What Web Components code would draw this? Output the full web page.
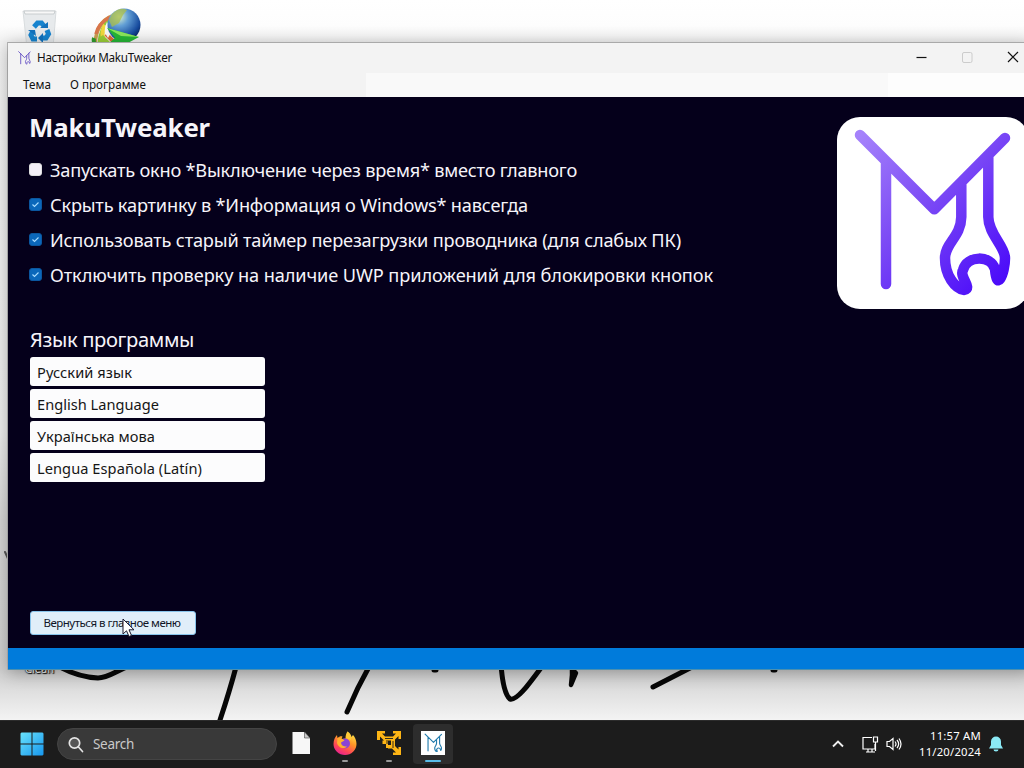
<!DOCTYPE html>
<html lang="ru">
<head>
<meta charset="utf-8">
<title>Настройки MakuTweaker</title>
<style>
html,body{margin:0;width:1024px;height:768px;overflow:hidden;background:#fff;font-family:"Noto Sans","Open Sans",sans-serif}
</style>
</head>
<body>
<desk-top>
  <app-window slot="window">
    <title-bar slot="bar"><fit-text w="135">Настройки MakuTweaker</fit-text></title-bar>
    <menu-bar slot="menu"><fit-text w="28">Тема</fit-text><fit-text w="76">О программе</fit-text></menu-bar>
    <settings-page></settings-page>
  </app-window>
  <task-bar slot="taskbar"></task-bar>
</desk-top>
<script>
const define=(name,html,Base=HTMLElement)=>customElements.define(name,class extends Base{
  constructor(){super();const t=document.createElement('template');t.innerHTML=html;
    this.attachShadow({mode:'open'}).append(t.content.cloneNode(true));}
});

/* A single line of text whose tracking is adjusted to fill the width given in "w". */
customElements.define('fit-text',class extends HTMLElement{
  constructor(){super();this.attachShadow({mode:'open'}).innerHTML='<style>:host{display:block;white-space:nowrap;flex:none}span{display:inline-block}</style><span><slot></slot></span>';}
  connectedCallback(){requestAnimationFrame(()=>this.fit());this.fit();}
  fit(){
    const s=this.shadowRoot.querySelector('span'),w=+this.getAttribute('w'),n=this.textContent.length;
    s.style.letterSpacing='0px';
    const cur=s.getBoundingClientRect().width;
    if(w&&cur&&n>1)s.style.letterSpacing=((w-cur)/n)+'px';
  }
});

const mark=`<path d="M23 18 97.3 92.3 168 21M49 44V167M124.300 66V100C124 120 108 126 108 141C108 159 118 171 127 173C136 171 122 160 126 153C130 138 154 138 158 152C159 163 161 165 163 162C166 158 168 148 168 141C168 129 151.300 117 151.300 100V38" fill="none" stroke-linecap="round" stroke-linejoin="round"/>`;

define('maku-logo',`<style>:host{display:block;width:192px;height:192px;border-radius:23px;background:#fff}svg{display:block}path{stroke:url(#g);stroke-width:10.500}</style>
<svg width="192" height="192" viewBox="0 0 192 192"><defs><linearGradient id="g" gradientUnits="userSpaceOnUse" x1="22" y1="18" x2="165" y2="165"><stop offset="0" stop-color="#a582fb"/><stop offset=".45" stop-color="#7d4cf5"/><stop offset="1" stop-color="#4b0bf9"/></linearGradient></defs>${mark}</svg>`);

define('title-bar',`<style>:host{display:flex;align-items:center;height:30px;background:#f3f3f3;color:#111;font-size:11.700px;padding-left:10px;box-sizing:border-box}
.i{width:13px;height:14px;margin-right:6px}.i path{stroke:#6550c4;stroke-width:11}slot{display:block;margin-top:-2px}
.c{display:flex;margin-left:auto;width:134px;height:30px}.c svg{width:46px;height:30px;flex:none;margin-top:-1px}.c svg:nth-child(2){width:45px}.c svg:last-child{width:34px}</style>
<svg class="i" viewBox="15 10 163 172" preserveAspectRatio="none">${mark}</svg><slot></slot>
<div class="c"><svg viewBox="0 0 46 30" fill="none" stroke="#111" stroke-width="1.200"><path d="M18.500 15.500h10"/></svg>
<svg viewBox="0 0 45 30" fill="none" stroke="#ccc"><rect x="18.500" y="10.500" width="9.500" height="10" rx="1.500"/></svg>
<svg viewBox="0 0 34 30" fill="none" stroke="#111" stroke-width="1.200"><path d="M19 10l10 10M29 10 19 20"/></svg></div>`);

define('menu-bar',`<style>:host{display:flex;align-items:center;gap:19px;height:24px;padding:0 0 2px 15px;box-sizing:border-box;font-size:11.700px;color:#111;background:linear-gradient(90deg,#f3f3f3 0 358px,#f9f9f9 358px 880px,#fdfdfd 880px)}</style><slot></slot>`);

define('app-window',`<style>:host{display:flex;flex-direction:column;width:1024px;height:628px;box-sizing:border-box;border-top:1px solid #a9a9a9;box-shadow:0 3px 16px rgba(0,0,0,.3),-1px 0 0 #bcbcbc}
.page{flex:1;background:#05001b;color:#f6f4fa;min-height:0}.status{height:22px;background:#007bdb;border-bottom:1px solid #4a90b0;box-sizing:border-box}</style>
<slot name="bar"></slot><slot name="menu"></slot><div class="page"><slot></slot></div><div class="status"></div>`);

define('check-row',`<style>:host{display:flex;align-items:center;height:35px;gap:8px;font-size:18.200px}
.b{width:13px;height:13px;border-radius:3px;background:#f4f0f8;box-sizing:border-box;border:1px solid #ddd;margin-top:-2px;flex:none}slot{display:block;margin-top:-2px}
svg{display:none}:host([checked]) .b{background:#0b67ba;border-color:#0b579f}:host([checked]) svg{display:block}</style>
<div class="b"><svg width="11" height="11" viewBox="0 0 11 11" fill="none" stroke="#a9dcff" stroke-width="1.100"><path d="M2.500 5.500l2 2 4-4"/></svg></div><slot></slot>`);

define('lang-item',`<style>:host{display:flex;align-items:center;height:29px;padding:0 7px;background:#fcfcfd;color:#161616;border-radius:3px;font-size:14.600px;box-sizing:border-box}</style><slot></slot>`);

define('action-button',`<style>:host{display:flex;align-items:center;justify-content:center;width:166px;height:24px;box-sizing:border-box;border-radius:3px;border:1px solid #88c4eb;background:#e0eef9;color:#101426;font-size:11.500px;padding:0 2px 1px 0}</style><slot></slot>`);

define('settings-page',`<style>:host{display:flex;height:551px;box-sizing:border-box;padding:15px 0 13px 22px;justify-content:space-between}
.l{display:flex;flex-direction:column;width:720px}.h{font-size:25.800px;font-weight:700;line-height:30px;height:41px;margin-left:-1px}
.checks{display:flex;flex-direction:column;margin-left:-1px}.lab{font-size:20.200px;line-height:30px;margin-top:31px;height:33px}
.langs{display:grid;gap:3px;width:235px}action-button{margin-top:auto}maku-logo{margin:5px 3px 0 0;flex:none}</style>
<div class="l"><fit-text class="h" w="181">MakuTweaker</fit-text>
<div class="checks">
<check-row><fit-text w="527">Запускать окно *Выключение через время* вместо главного</fit-text></check-row>
<check-row checked><fit-text w="478">Скрыть картинку в *Информация о Windows* навсегда</fit-text></check-row>
<check-row checked><fit-text w="631">Использовать старый таймер перезагрузки проводника (для слабых ПК)</fit-text></check-row>
<check-row checked><fit-text w="663">Отключить проверку на наличие UWP приложений для блокировки кнопок</fit-text></check-row>
</div>
<fit-text class="lab" w="164">Язык программы</fit-text>
<div class="langs">
<lang-item><fit-text w="95">Русский язык</fit-text></lang-item>
<lang-item><fit-text w="122">English Language</fit-text></lang-item>
<lang-item><fit-text w="118">Українська мова</fit-text></lang-item>
<lang-item><fit-text w="165">Lengua Española (Latín)</fit-text></lang-item>
</div>
<action-button><fit-text w="137">Вернуться в главное меню</fit-text></action-button></div>
<maku-logo></maku-logo>`);

define('task-app',`<style>:host{display:flex;flex-direction:column;align-items:center;width:40px;height:40px;border-radius:4px;box-sizing:border-box;padding-top:7px}
:host([active]){background:#2d2d2d}i{display:block;height:2.500px;width:6px;border-radius:2px;background:#999;margin-top:4.500px}
:host([active]) i{width:16px;background:#59bce9}:host([idle]) i{display:none}::slotted(svg){display:block;width:24px;height:24px}</style><slot></slot><i></i>`);

define('task-bar',`<style>:host{display:flex;align-items:center;height:48px;background:#1c1c1c;color:#fff;box-sizing:border-box;border-top:1px solid #2c2c2c;padding-bottom:1px}
.win{width:24px;height:24px;margin-left:20px;flex:none}
.search{display:flex;align-items:center;gap:9px;width:220px;height:32px;margin-left:13px;border-radius:16px;background:#393939;border:1px solid #444;box-sizing:border-box;padding-left:10px;color:#c9c9c9;font-size:13.500px;flex:none}
.apps{display:flex;gap:4px;margin-left:4px}
.tray{display:flex;align-items:center;margin-left:auto;flex:none;padding-right:21px}
.clock{display:flex;flex-direction:column;align-items:flex-end;font-size:11.300px;line-height:16px;margin:0 8px 0 17px}</style>
<svg class="win" viewBox="0 0 24 24"><defs><linearGradient id="w" x1="0" y1="0" x2="24" y2="24" gradientUnits="userSpaceOnUse"><stop stop-color="#6be4fb"/><stop offset="1" stop-color="#1595ee"/></linearGradient></defs><path fill="url(#w)" d="M1.500.5h10v11H.5v-10zM12.500.5h10l1 1v10h-11zM.5 12.500h11v11h-10l-1-1zM12.500 12.500h11v10l-1 1h-10z"/></svg>
<div class="search"><svg width="16" height="17" viewBox="0 0 16 17" fill="#555" stroke="#e4e4e4" stroke-width="1.700" stroke-linecap="round"><circle cx="6.500" cy="7" r="5.200"/><path d="M10.500 11l4 4.500"/></svg><fit-text w="41">Search</fit-text></div>
<div class="apps">
<task-app idle><svg viewBox="0 0 24 24"><path d="M3.500 1h12l5.500 6v16H3.500z" fill="#f7f7f7"/><path d="M15.500 1L21 7h-5.500z" fill="#c9c9c9" stroke="#444" stroke-width=".6"/></svg></task-app>
<task-app><svg viewBox="0 0 24 24"><defs><linearGradient id="f" x1="18" y1="1" x2="6" y2="23" gradientUnits="userSpaceOnUse"><stop stop-color="#ffe84a"/><stop offset=".4" stop-color="#ff9727"/><stop offset=".75" stop-color="#ff4656"/><stop offset="1" stop-color="#e82290"/></linearGradient></defs><path fill="url(#f)" d="M14.500.5C17 2 18 4 18.500 6l1.500-2c2 2 3.500 5.500 3.500 9A11.500 11 0 0 1 .5 13C.5 9 2 6 4 4l.5 3C6 5.500 8 5 9.500 5.500L8.500 8l4-.5C12.500 5 13 2 14.500.5z"/><circle cx="12" cy="12.500" r="5" fill="#8b43d4"/><path fill="#ffb02e" d="M4.500 7c3 0 5 .5 7 2.500L8 11.500c0 3 3 4.500 6 4C10 19 5 16 4 12z"/><path fill="#ffca36" d="M14.500.5C17 3 18 6 18 9L13 7z"/></svg></task-app>
<task-app><svg viewBox="0 0 24 24" fill="#fdb515"><path d="M0 0h8v2.500H5L8 5.500h8L19 2.500h-3V0h8v8h-2.500V5L18 8.500V15l3.500 3.500V16H24v8h-8v-2.500h3L15 17.500h-4V14h3V9.500H7L3 5.500V9H0zM5.500 9.500H11V17H9v-4H5.500z"/><g stroke="#1c1c1c" stroke-width=".9" fill="none"><path d="M8 7.500h8M16 10v7M10 9v4"/></g></svg></task-app>
<task-app active><svg viewBox="0 0 24 24"><path fill="#fff" d="M0 0h24v24H0z"/><g transform="translate(1.500 1) scale(.113)" stroke="#237cad" stroke-width="10">${mark}</g></svg></task-app>
</div>
<div class="tray">
<svg width="12" height="8" viewBox="0 0 12 8" fill="none" stroke="#eee" stroke-width="1.900"><path d="M1 6.500l5-5 5 5"/></svg>
<svg style="margin-left:18px" width="17" height="17" viewBox="0 0 17 17" fill="none" stroke="#fff" stroke-width="1.200"><path d="M10 1.500H1v11.500h12V8M4 16h9M6 13v3M10 13v3M11.500 1h4v5h-4zM13.500 6v9"/></svg>
<svg style="margin-left:7px" width="16" height="14" viewBox="0 0 16 14" fill="none" stroke="#fff" stroke-width="1.200"><path d="M1 4.500h2.500L7 1.500v11l-3.500-3H1zM9 4.500q2 2.500 0 5M11 3q3.300 4 0 8M13 1.500q4 5.500 0 11"/></svg>
<div class="clock"><fit-text w="51">11:57 AM</fit-text><fit-text w="62">11/20/2024</fit-text></div>
<svg width="14" height="16" viewBox="0 0 14 16" fill="#8be9f5"><path d="M7 .5A5 5 0 0 1 12 5.500V9l2 3.500H0L2 9V5.500A5 5 0 0 1 7 .5zM4.500 13.500h5a2.500 2 0 0 1-5 0z"/></svg>
</div>`);

define('desk-top',`<style>:host{display:flex;flex-direction:column;position:relative;width:1024px;height:768px;overflow:hidden;background:#fff}
.space{flex:1;position:relative;background:linear-gradient(#fff 0,#fdfdfd 25px,#f3f3f3 42px,#eee 430px,#d6d6d6 520px,#d0d0d0 670px,#f3f3f3 720px)}
.art,.icons{position:absolute;left:0;top:0}::slotted(app-window){position:absolute;left:8px;top:42px}
.cursor{position:absolute;left:122px;top:618px}
.label{position:absolute;left:25px;top:661px;color:#fff;font-size:11px;line-height:16px;text-shadow:0 0 2px #000,1px 1px 1px #000,0 0 1px #000}</style>
<div class="space">
<svg class="icons" width="150" height="48" viewBox="0 0 150 48"><defs><radialGradient id="b" cx=".35" cy=".25" r=".8"><stop stop-color="#d9efcc"/><stop offset=".35" stop-color="#629fd5"/><stop offset=".8" stop-color="#174b9e"/><stop offset="1" stop-color="#0a2761"/></radialGradient></defs>
<path d="M23 11h33l-3 37H27z" fill="#e7eaec" stroke="#d8dcde"/><path d="M24 11h31l-1 3H25z" fill="#f8f8f8" stroke="#b9bfc2" stroke-width=".7"/>
<g fill="none" stroke="#1683ce" stroke-width="5"><path d="M34 27l3.500-4h4l2.500 3M47 30l1.500 4-2.500 4h-4M37 39h-4l-2-4 2-4"/></g><g fill="#1372bd"><path d="M40 28h8v-6zM43 33v10l-5-5zM28 30h7l1 6z"/></g>
<g fill="none" stroke-width="3.600"><path d="M112 16C102 20 96 29 95 44" stroke="#c9a050"/><path d="M111 18C105 23 100 31 99 45" stroke="#8fc93a"/><path d="M110 17C101 22 97 29 96 34" stroke="#d9764a"/><path d="M94 38C93 41 94 43 95 45" stroke="#2f9c2c" stroke-width="4"/><path d="M105 25C101 33 102 38 106 45" stroke="#f1d83c" stroke-width="4"/><path d="M106 34L115 43" stroke="#e26b35" stroke-width="4"/></g><path d="M107 22Q102 31 108 38L112 31z" fill="#f8f8f5"/><path d="M98 45Q98 37 103 35L113 45z" fill="#9bcf37"/>
<circle cx="124" cy="25" r="16.500" fill="url(#b)"/><path d="M112 14q8-8 15-4l-4 5-4 8-7 4-3-7z" fill="#a9bd48" opacity=".75"/><path d="M107 28l32 9-13 7H108l7-6z" fill="#26b636"/><path d="M107 28l32 9-18-1z" fill="#8ce75b"/></svg>
<svg class="art" width="1024" height="720" viewBox="0 0 1024 720" fill="none" stroke="#070707" stroke-width="5" stroke-linecap="round"><path d="M62 668Q79 677 98 678C109 678 115 671 132 665M236 667C232 682 226 702 220 720M370 665Q357 688 347 712M501 664Q503 693 510 699C517 701 529 684 543 665M653 687 692 667M434 670h2M773 670h2" /><path d="M572 669l4 4-5 12 1-10z" stroke-width="4.500" fill="#070707" stroke-linejoin="round"/><path d="M5 552l5 11" stroke-width="2" stroke="#555"/></svg>
<div class="label">Clean</div>
<slot name="window"></slot>
<svg class="cursor" width="14" height="20" viewBox="0 0 14 20"><path d="M1 1v15l3.500-3.200 2.500 5.700 2.500-1.100-2.500-5.600h5z" fill="#fff" stroke="#17172c" stroke-width="1"/></svg>
</div><slot name="taskbar"></slot>`);
</script>
</body>
</html>
